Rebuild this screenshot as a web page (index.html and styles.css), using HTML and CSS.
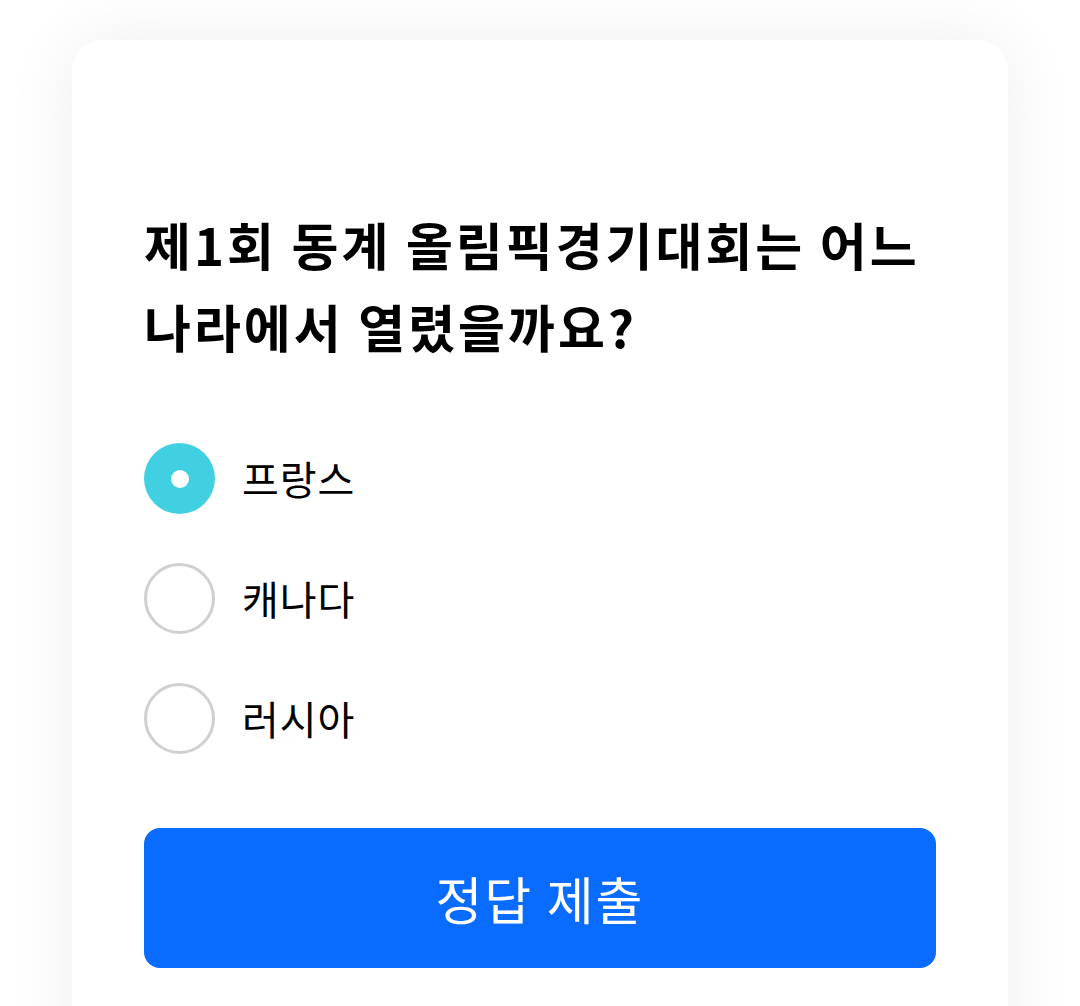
FILE: index.html
```html
<!DOCTYPE html>
<html>
<head>
  <title>퀴즈</title>
  <link rel="stylesheet" href="styles.css">
</head>
<body>
  <div class="quiz-card">
    <h2 class="question">제1회 동계 올림픽경기대회는 어느 나라에서 열렸을까요?</h2>

    <div class="options">
      <label class="option">
        <span class="radio checked"></span>
        <span class="option-text">프랑스</span>
      </label>
      <label class="option">
        <span class="radio"></span>
        <span class="option-text">캐나다</span>
      </label>
      <label class="option">
        <span class="radio"></span>
        <span class="option-text">러시아</span>
      </label>
    </div>

    <button class="submit-btn">정답 제출</button>
  </div>
</body>
</html>
```

FILE: styles.css
```css
body {
  margin: 0;
  background: #ffffff;
  font-family: "Noto Sans CJK KR", "Noto Sans", sans-serif;
  color: #000;
  overflow: hidden;
}
.quiz-card {
  margin: 40px 72px 0 72px;
  min-height: 1100px;
  background: white;
  border-radius: 30px;
  box-shadow: 0 0 70px rgba(0,0,0,0.07);
  padding: 163px 72px 0 72px;
  box-sizing: border-box;
}
.question {
  margin: 0 0 76px 0;
  font-size: 51px;
  font-weight: 700;
  line-height: 82px;
  letter-spacing: 3px;
  word-break: keep-all;
}
.options {
  display: flex;
  flex-direction: column;
  gap: 49px;
  margin-bottom: 74px;
}
.option {
  display: flex;
  align-items: center;
  gap: 27px;
}
.radio {
  width: 71px;
  height: 71px;
  box-sizing: border-box;
  border-radius: 50%;
  border: 3px solid #d0d0d0;
  display: flex;
  align-items: center;
  justify-content: center;
}
.radio.checked {
  border: none;
  background: #40d0e2;
}
.radio.checked::after {
  content: "";
  width: 18px;
  height: 18px;
  border-radius: 50%;
  background: white;
}
.option-text {
  font-size: 40px;
  line-height: 71px;
  letter-spacing: 1px;
}
.submit-btn {
  display: block;
  width: 100%;
  height: 140px;
  border: none;
  border-radius: 16px;
  background: #0a6cff;
  color: white;
  font-family: inherit;
  font-size: 51px;
  font-weight: 400;
  letter-spacing: 2px;
  cursor: pointer;
}
```
